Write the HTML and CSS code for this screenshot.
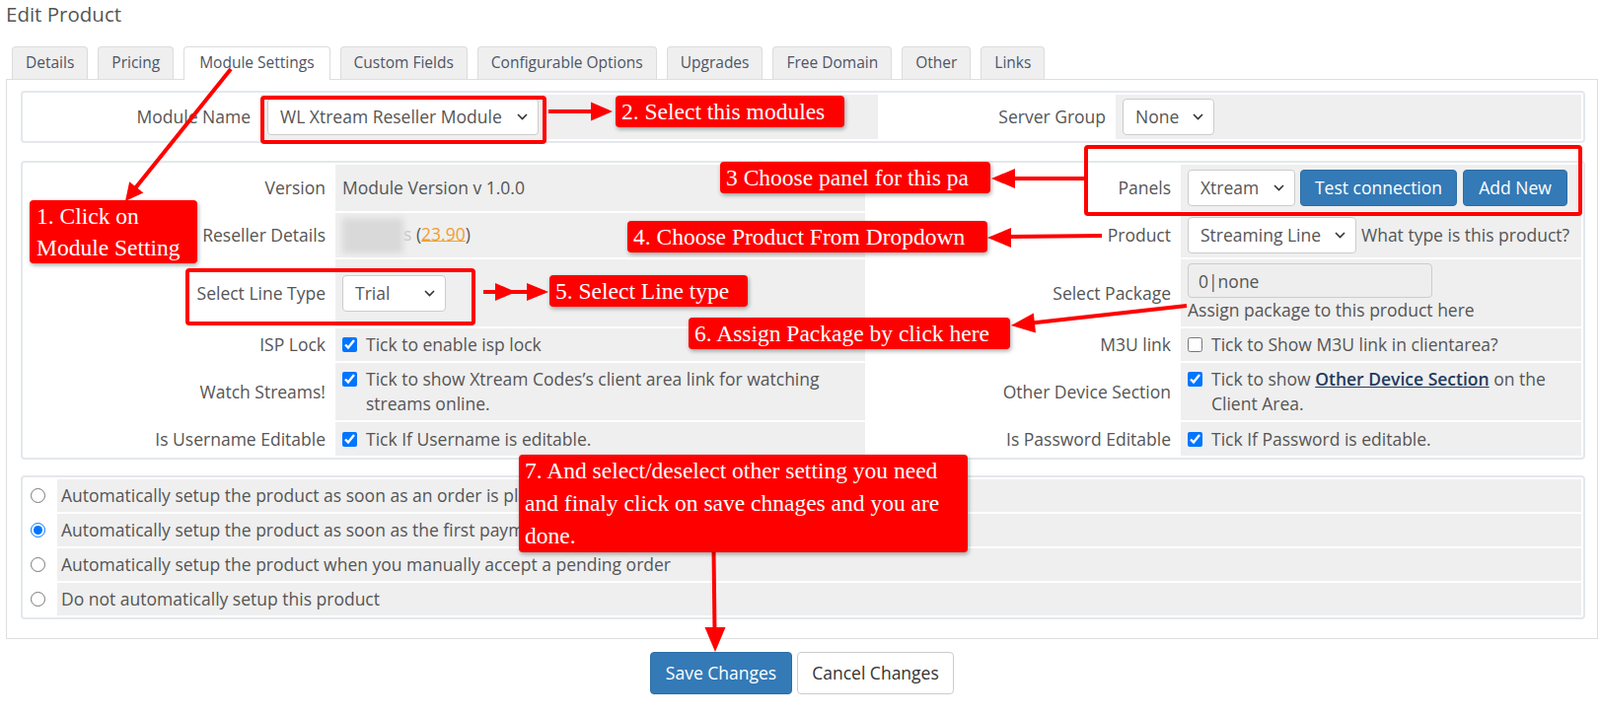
FILE: index.html
```html
<!DOCTYPE html>
<html lang="en">

<head>
    <meta charset="UTF-8">
    <meta name="viewport" content="width=device-width, initial-scale=1.0">
    <title>Edit Product</title>
    <link rel="stylesheet" href="styles.css">
</head>

<body>
    <div class="page">
        <h1 class="title">Edit Product</h1>

        <ul class="tabs">
            <li class="tab">Details</li>
            <li class="tab">Pricing</li>
            <li class="tab active">Module Settings</li>
            <li class="tab">Custom Fields</li>
            <li class="tab">Configurable Options</li>
            <li class="tab">Upgrades</li>
            <li class="tab">Free Domain</li>
            <li class="tab">Other</li>
            <li class="tab">Links</li>
        </ul>

        <div class="tab-panel">
            <!-- module picker -->
            <table class="form-table module-table">
                <tr>
                    <td class="label c1">Module Name</td>
                    <td class="field c2">
                        <span class="select-wrap">
                            <select class="select w-module"><option>WL Xtream Reseller Module</option></select>
                            <svg class="chev" width="11" height="7" viewBox="0 0 11 7"><path d="M1 1l4.5 4.5L10 1" fill="none" stroke="#333" stroke-width="1.6"/></svg>
                        </span>
                    </td>
                    <td class="label c3">Server Group</td>
                    <td class="field">
                        <span class="select-wrap">
                            <select class="select w-none"><option>None</option></select>
                            <svg class="chev" width="11" height="7" viewBox="0 0 11 7"><path d="M1 1l4.5 4.5L10 1" fill="none" stroke="#333" stroke-width="1.6"/></svg>
                        </span>
                    </td>
                </tr>
            </table>

            <!-- module config -->
            <table class="form-table settings-table">
                <tr class="r1">
                    <td class="label c1">Version</td>
                    <td class="field c2">Module Version v 1.0.0</td>
                    <td class="label c3">Panels</td>
                    <td class="field">
                        <div class="inline">
                            <span class="select-wrap">
                                <select class="select w-xtream"><option>Xtream</option></select>
                                <svg class="chev" width="11" height="7" viewBox="0 0 11 7"><path d="M1 1l4.5 4.5L10 1" fill="none" stroke="#333" stroke-width="1.6"/></svg>
                            </span>
                            <button class="btn btn-primary w-test">Test connection</button>
                            <button class="btn btn-primary w-add">Add New</button>
                        </div>
                    </td>
                </tr>
                <tr class="r2">
                    <td class="label">Reseller Details</td>
                    <td class="field"><span class="blurred"></span><span class="faded">s</span> (<a class="credit" href="#">23.90</a>)</td>
                    <td class="label">Product</td>
                    <td class="field">
                        <div class="inline">
                            <span class="select-wrap">
                                <select class="select w-stream"><option>Streaming Line</option></select>
                                <svg class="chev" width="11" height="7" viewBox="0 0 11 7"><path d="M1 1l4.5 4.5L10 1" fill="none" stroke="#333" stroke-width="1.6"/></svg>
                            </span>
                            <span>What type is this product?</span>
                        </div>
                    </td>
                </tr>
                <tr class="r3">
                    <td class="label">Select Line Type</td>
                    <td class="field">
                        <span class="select-wrap">
                            <select class="select w-trial"><option>Trial</option></select>
                            <svg class="chev" width="11" height="7" viewBox="0 0 11 7"><path d="M1 1l4.5 4.5L10 1" fill="none" stroke="#333" stroke-width="1.6"/></svg>
                        </span>
                    </td>
                    <td class="label">Select Package</td>
                    <td class="field">
                        <input class="text-input" value="0|none" readonly>
                        <div>Assign package to this product here</div>
                    </td>
                </tr>
                <tr class="r4">
                    <td class="label">ISP Lock</td>
                    <td class="field"><label class="check"><input type="checkbox" checked><span>Tick to enable isp lock</span></label></td>
                    <td class="label">M3U link</td>
                    <td class="field"><label class="check"><input type="checkbox"><span>Tick to Show M3U link in clientarea?</span></label></td>
                </tr>
                <tr class="r5">
                    <td class="label">Watch Streams!</td>
                    <td class="field"><label class="check"><input type="checkbox" checked><span>Tick to show Xtream Codes’s client area link for watching streams online.</span></label></td>
                    <td class="label">Other Device Section</td>
                    <td class="field"><label class="check"><input type="checkbox" checked><span>Tick to show <a class="strong-link" href="#">Other Device Section</a> on the Client Area.</span></label></td>
                </tr>
                <tr class="r6">
                    <td class="label">Is Username Editable</td>
                    <td class="field"><label class="check"><input type="checkbox" checked><span>Tick If Username is editable.</span></label></td>
                    <td class="label">Is Password Editable</td>
                    <td class="field"><label class="check"><input type="checkbox" checked><span>Tick If Password is editable.</span></label></td>
                </tr>
            </table>

            <!-- auto setup -->
            <table class="form-table radio-table">
                <tr>
                    <td class="radio-cell"><input type="radio" name="autosetup"></td>
                    <td class="field">Automatically setup the product as soon as an order is placed</td>
                </tr>
                <tr>
                    <td class="radio-cell"><input type="radio" name="autosetup" checked></td>
                    <td class="field">Automatically setup the product as soon as the first payment is received</td>
                </tr>
                <tr>
                    <td class="radio-cell"><input type="radio" name="autosetup"></td>
                    <td class="field">Automatically setup the product when you manually accept a pending order</td>
                </tr>
                <tr>
                    <td class="radio-cell"><input type="radio" name="autosetup"></td>
                    <td class="field">Do not automatically setup this product</td>
                </tr>
            </table>
        </div>

        <div class="actions">
            <button class="btn btn-primary btn-save">Save Changes</button>
            <button class="btn btn-default btn-cancel">Cancel Changes</button>
        </div>
    </div>

    <!-- tutorial markup drawn over the screen -->
    <svg class="marks" width="1622" height="727" viewBox="0 0 1622 727">
        <g fill="none" stroke="#ff0000" stroke-width="4">
            <rect x="266" y="99" width="286" height="45" rx="2"/>
            <rect x="1101" y="149" width="501" height="68" rx="2"/>
            <rect x="190" y="274" width="290" height="54" rx="2"/>
        </g>
        <g stroke="#ff0000" stroke-width="4">
            <line x1="234" y1="70" x2="137" y2="191"/>
            <line x1="556" y1="113" x2="602" y2="113"/>
            <line x1="1099" y1="181" x2="1027" y2="181"/>
            <line x1="1117" y1="239" x2="1022" y2="240"/>
            <line x1="490" y1="296" x2="552" y2="296"/>
            <line x1="1203" y1="310" x2="1046" y2="327.5"/>
            <line x1="723.5" y1="558" x2="724.5" y2="640"/>
        </g>
        <g fill="#ff0000">
            <polygon points="127,204 145.3,195.6 131.2,184.3"/>
            <polygon points="621,113 599,103.5 599,122.5"/>
            <polygon points="1005,181 1029,171 1029,191"/>
            <polygon points="1001,241 1025,231 1025,251"/>
            <polygon points="523,296 502,287 502,305"/>
            <polygon points="556,296 534,287 534,305"/>
            <polygon points="1025,330 1050,337.4 1047.8,317.6"/>
            <polygon points="725,661 714.5,636 735.5,636"/>
        </g>
    </svg>

    <div class="note n1">1. Click on<br>Module Setting</div>
    <div class="note n2">2. Select this modules</div>
    <div class="note n3">3 Choose panel for this pa</div>
    <div class="note n4">4. Choose Product From Dropdown</div>
    <div class="note n5">5. Select Line type</div>
    <div class="note n6">6. Assign Package by click here</div>
    <div class="note n7">7. And select/deselect other setting you need<br>and finaly click on save chnages and you are<br>done.</div>
</body>

</html>
```

FILE: styles.css
```css
* {
    box-sizing: border-box;
}

body {
    margin: 0;
    position: relative;
    width: 1622px;
    height: 727px;
    overflow: hidden;
    background: #fff;
    font-family: "Open Sans", "Liberation Sans", sans-serif;
    font-size: 17.5px;
    line-height: 25px;
    color: #555;
}

.page {
    margin-left: 6px;
    width: 1614px;
}

.title {
    margin: 0 0 19px;
    font-size: 20.5px;
    font-weight: 400;
    line-height: 28px;
    color: #555;
}

/* tabs */
.tabs {
    list-style: none;
    margin: 0 0 0 6px;
    padding: 0;
    display: flex;
    gap: 10px;
    height: 33px;
    position: relative;
    z-index: 1;
}

.tab {
    height: 33px;
    padding: 0 13px;
    border: 1px solid #dcdcdc;
    border-bottom: none;
    border-radius: 4px 4px 0 0;
    background: #efefef;
    font-size: 15.5px;
    line-height: 31px;
    color: #4d5566;
}

.tab.active {
    background: #fff;
    height: 34px;
    padding: 0 15px;
}

.tab-panel {
    border: 1px solid #dedede;
    padding: 11px 12px 19px 14px;
}

/* form tables */
.form-table {
    width: 100%;
    table-layout: fixed;
    border-collapse: separate;
    border-spacing: 2px;
    border: 2px solid #e4e8ec;
    border-radius: 4px;
}

.form-table td {
    padding: 4px 7px;
    vertical-align: middle;
}

.form-table .label {
    text-align: right;
    padding-right: 8px;
    background: #fff;
}

.form-table .field {
    background: #efefef;
}

.module-table {
    margin-bottom: 18px;
}

.module-table td {
    height: 44px;
}

.module-table .c1 { width: 237px; }
.module-table .c2 { width: 626px; }
.module-table .c3 { width: 237px; }

.settings-table {
    margin-bottom: 16px;
}

.settings-table .c1 { width: 313px; }
.settings-table .c2 { width: 537px; }
.settings-table .c3 { width: 316px; }

.r1 td { height: 47px; }
.r2 td { height: 45px; }
.r3 td { height: 68px; }
.r4 td { height: 33px; }
.r5 td { height: 56px; }
.r6 td { height: 34px; }

.radio-table td {
    height: 33px;
}

.radio-table .radio-cell {
    width: 31px;
    padding: 0 0 0 6px;
    background: #fff;
}

.radio-table .field {
    padding-left: 4px;
}

.radio-cell input {
    display: block;
    width: 15px;
    height: 15px;
    margin: 0;
    accent-color: #0075ff;
}

/* controls */
.select-wrap {
    position: relative;
    display: inline-block;
    vertical-align: middle;
}

.select {
    display: block;
    appearance: none;
    -webkit-appearance: none;
    height: 37px;
    margin: 0;
    padding: 0 28px 0 12px;
    border: 1px solid #ccc;
    border-radius: 4px;
    background: #fff;
    font: inherit;
    color: #555;
}

.chev {
    position: absolute;
    right: 11px;
    top: 15px;
    pointer-events: none;
}

.w-module { width: 275px; }
.w-none { width: 93px; }
.w-xtream { width: 109px; }
.w-stream { width: 171px; }
.w-trial { width: 105px; }

.inline {
    display: flex;
    align-items: center;
    gap: 5px;
}

.btn {
    height: 37px;
    margin: 0;
    padding: 0 12px;
    border-radius: 4px;
    font: inherit;
    cursor: pointer;
}

.btn-primary {
    border: 1px solid #2e6da4;
    background: #337ab7;
    color: #fff;
}

.btn-default {
    border: 1px solid #ccc;
    background: #fff;
    color: #333;
}

.w-test { width: 159px; }
.w-add { width: 106px; margin-left: 1px; }

.text-input {
    display: block;
    width: 248px;
    height: 35px;
    margin: 0;
    padding: 0 10px;
    border: 1px solid #ccc;
    border-radius: 4px;
    background: #eee;
    font: inherit;
    color: #555;
}

.check {
    display: flex;
    align-items: flex-start;
    gap: 9px;
}

.check input {
    flex: none;
    width: 15px;
    height: 15px;
    margin: 5px 0 0;
    accent-color: #0075ff;
}

.blurred {
    display: inline-block;
    width: 62px;
    height: 36px;
    vertical-align: middle;
    background: #d9d9d9;
    filter: blur(3px);
}

.faded {
    color: #c8c8c8;
}

.credit {
    color: #f0a030;
    text-decoration: underline;
}

.strong-link {
    color: #233a5e;
    font-weight: 600;
    text-decoration: underline;
}

.actions {
    display: flex;
    justify-content: center;
    gap: 5px;
    margin-top: 13px;
}

.btn-save {
    width: 144px;
    height: 43px;
}

.btn-cancel {
    width: 159px;
    height: 43px;
}

/* annotations */
.marks {
    position: absolute;
    left: 0;
    top: 0;
    z-index: 5;
    pointer-events: none;
}

.note {
    position: absolute;
    z-index: 6;
    padding: 0 6px;
    border-radius: 4px;
    background: #ff0000;
    box-shadow: 1px 2px 4px rgba(0, 0, 0, 0.35);
    color: #fff;
    font-family: "Liberation Serif", "Times New Roman", serif;
    font-size: 23.5px;
    line-height: 32px;
    white-space: nowrap;
}

.n1 { left: 30px; top: 203px; width: 170px; padding-left: 7px; }
.n2 { left: 624px; top: 97px; width: 232px; }
.n3 { left: 730px; top: 164px; width: 274px; }
.n4 { left: 636px; top: 224px; width: 365px; }
.n5 { left: 557px; top: 279px; width: 201px; }
.n6 { left: 698px; top: 322px; width: 326px; }
.n7 { left: 526px; top: 461px; width: 455px; height: 99px; line-height: 33px; }
```
